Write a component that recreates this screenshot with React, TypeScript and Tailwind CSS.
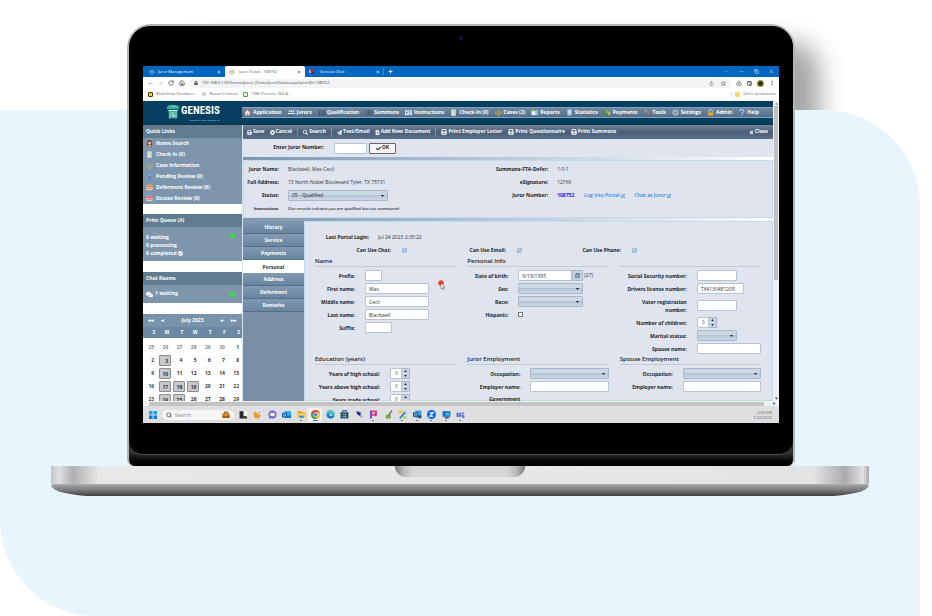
import React from "react";
import type { ReactNode } from "react";
import {
  FaSave, FaTimesCircle, FaSearch, FaPaperPlane, FaFileMedical, FaPrint, FaTimes, FaCheck,
  FaExternalLinkAlt, FaComments, FaCheckCircle, FaRegCalendarAlt, FaLock, FaGlobe,
} from "react-icons/fa";
import { ArrowLeft, ArrowRight, RotateCw, Home, Share, Star, Download, PanelRight, MoreVertical, Minus, Copy, X, Plus, ChevronDown, Search, Check } from "lucide-react";

type Kind =
  | "house" | "people" | "grid" | "card" | "sheet" | "scales" | "table" | "chart"
  | "money" | "pencil" | "gear" | "lock" | "help" | "badge" | "pin" | "cal" | "calred";

function Glyph({ kind }: { kind: Kind }) {
  const art: Record<Kind, ReactNode> = {
    house: <><path d="M1 8 8 1l7 7h-2v7H3V8z" fill="#f3e6dc" /><path d="M1 8 8 1l7 7" stroke="#d9582b" strokeWidth="2" fill="none" /><path d="M7 10h3v5H7z" fill="#b5652e" /></>,
    people: <><path d="M0 9h16v3H0z" fill="#e6edf2" /><circle cx="3" cy="5" r="2" fill="#b9d7ec" /><circle cx="8" cy="5" r="2" fill="#fff" /><circle cx="13" cy="5" r="2" fill="#b9d7ec" /><path d="M1 13h14v1H1z" fill="#2f4a61" /></>,
    grid: <><path d="M2 2h3v12H2zM7 2h3v12H7zM12 2h3v12h-3z" fill="#34495f" /><path d="M2 6h13M2 10h13" stroke="#8296aa" /></>,
    card: <><path d="M0 3h16v11H0z" fill="#e4ecf2" /><path d="M2 6h4v5H2z" fill="#5f88a9" /><path d="M8 6h6M8 9h6M8 12h4" stroke="#6f8496" strokeWidth="1.5" /></>,
    sheet: <><path d="M3 1h10v14H3z" fill="#e9f0e2" /><path d="M5 4h6M5 7h6M5 10h6" stroke="#98aabb" /><path d="M11 1h2v14h-2z" fill="#c4cf9b" /></>,
    scales: <><path d="M8 2v12M1 7h14" stroke="#b9a04a" strokeWidth="2" /><path d="M0 10h5M11 10h5M5 14h6" stroke="#d6b64c" strokeWidth="2" /></>,
    table: <><path d="M1 2h14v12H1z" fill="#eaf3f7" /><path d="M1 2h14v3H1z" fill="#6fb255" /><path d="M10 5h5v9h-5z" fill="#8bc3dd" /></>,
    chart: <><path d="M3 1h10v14H3z" fill="#9cc8f0" /><path d="M5 4h6M5 7h6M5 10h6" stroke="#e8f4ff" strokeWidth="1.5" /></>,
    money: <><path d="M1 4h9v10H1z" fill="#4a8c3a" /><circle cx="7" cy="6" r="4" fill="#80b93b" /><path d="M10 6h4v8h-4z" fill="#e0c443" /></>,
    pencil: <><path d="m2 2 11 11" stroke="#e07b35" strokeWidth="3" /><path d="m2 2 4 4" stroke="#c9d2da" strokeWidth="2" /><path d="m12 11 3 4-4-2z" fill="#5d3c20" /></>,
    gear: <><circle cx="8" cy="8" r="5" fill="none" stroke="#b3bcc5" strokeWidth="4" /><circle cx="8" cy="8" r="2" fill="#71849a" /></>,
    lock: <><path d="M4 8V5a4 4 0 0 1 8 0v3" fill="none" stroke="#d3d9df" strokeWidth="2" /><path d="M2 8h12v7H2z" fill="#e6a52c" /></>,
    help: <><path d="M4 5c0-5 9-5 9 0 0 3-4 3-4 6" fill="none" stroke="#8fc4f5" strokeWidth="3" /><circle cx="9" cy="14" r="2" fill="#6aaef0" /></>,
    badge: <><path d="M3 1h10v14H3z" fill="#7c2b1d" /><circle cx="8" cy="7" r="3" fill="#f4dfc6" /><path d="M5 11h6v4H5z" fill="#e8c25d" /><path d="M1 4h2v3H1zM13 4h2v3h-2z" fill="#e46b4b" /></>,
    pin: <><circle cx="8" cy="5" r="4" fill="#5f93cf" /><path d="M7 8h2v7H7z" fill="#4a79b4" /><circle cx="8" cy="5" r="2" fill="#95bde8" /></>,
    cal: <><path d="M1 3h14v11H1z" fill="#f0d2bb" /><path d="M1 3h14v4H1z" fill="#ea7a3c" /><path d="M4 1v4M8 1v4M12 1v4" stroke="#f6ebe2" /><path d="M3 10h10" stroke="#de6c3a" strokeWidth="2" /></>,
    calred: <><path d="M1 3h14v11H1z" fill="#f3cccc" /><path d="M1 3h14v4H1z" fill="#df4f58" /><path d="M4 1v4M8 1v4M12 1v4" stroke="#f6e2e2" /><path d="M3 10h10" stroke="#d95d63" strokeWidth="2" /></>,
  };
  return <svg viewBox="0 0 16 16" className="size-[7px] shrink-0" aria-hidden="true">{art[kind]}</svg>;
}

function ScalesMark({ color = "#9fb4c6" }: { color?: string }) {
  return (
    <svg viewBox="0 0 16 16" className="size-[6px] shrink-0" aria-hidden="true">
      <path d="M8 1v13M2 5h12" stroke={color} strokeWidth="1.6" />
      <path d="M0 10h6L3 5zM10 10h6l-3-5zM5 14h6" fill="none" stroke={color} strokeWidth="1.4" />
    </svg>
  );
}

/* ---------- browser chrome ---------- */

function TabStrip() {
  return (
    <div className="flex h-[11px] items-center bg-[#0067c0] text-[4px] text-white">
      <button className="flex w-[82px] items-center gap-[3px] pl-[6px] pr-[4px]">
        <ScalesMark /><span>Juror Management</span><X className="ml-auto size-[4px]" strokeWidth={4} />
      </button>
      <button className="flex h-full w-[80px] items-center gap-[4px] rounded-t-[2px] bg-white pl-[4px] pr-[4px] text-[#555]">
        <ScalesMark color="#b09d64" /><span>Juror Detail - 108752</span><X className="ml-auto size-[4px]" strokeWidth={4} />
      </button>
      <button className="flex w-[78px] items-center gap-[4px] pl-[4px] pr-[3px]">
        <svg viewBox="0 0 16 16" className="size-[5px]" aria-hidden="true"><path d="M1 3h9v9H1z" fill="#f6f6f6" /><path d="M4 1h10v10H4z" fill="#d2273c" /><path d="M8 9h8v6H8z" fill="#8d1731" /></svg>
        <span>· Genesis Chat</span><X className="ml-auto size-[4px]" strokeWidth={4} />
      </button>
      <span className="h-[7px] w-px bg-[#3f8fd4]" />
      <button aria-label="New tab" className="ml-[4px]"><Plus className="size-[5px]" strokeWidth={4} /></button>
      <div className="ml-auto flex items-center gap-[10px] pr-[5px] text-[#b9dafa]">
        <ChevronDown className="size-[5px]" /><Minus className="size-[5px]" /><Copy className="size-[5px]" strokeWidth={3} /><X className="size-[5px]" strokeWidth={3} />
      </div>
    </div>
  );
}

function AddressBar() {
  return (
    <div className="flex h-[12px] items-center bg-white pl-[5px] pr-[4px] text-[#555]">
      <div className="flex items-center gap-[5px]">
        <ArrowLeft className="size-[5px] text-[#888]" /><ArrowRight className="size-[5px] text-[#aaa]" />
        <RotateCw className="size-[6px]" strokeWidth={3} /><Home className="size-[6px]" strokeWidth={3} />
      </div>
      <div className="ml-[4px] flex h-[9px] min-w-0 flex-1 items-center gap-[4px] rounded-full bg-[#f1f3f4] px-[5px]">
        <FaLock className="size-[4px] shrink-0" />
        <input aria-label="Address" readOnly className="min-w-0 flex-1 bg-transparent font-['Noto_Sans',sans-serif] text-[4px] leading-[8px] text-[#555] outline-none" value="192.168.0.110/GenesisJuror_Demo/JurorDetail.aspx?jurorID=108752" />
        <Share className="size-[5px]" /><Star className="ml-[3px] size-[5px]" strokeWidth={3} />
      </div>
      <div className="ml-[5px] flex items-center gap-[5px]">
        <Download className="size-[6px]" strokeWidth={3} /><PanelRight className="size-[5px]" strokeWidth={4} />
        <span className="size-[7px] rounded-full bg-[radial-gradient(#2b2414_30%,#8a9a3c_60%,#b06a3c)]" />
        <MoreVertical className="size-[6px]" />
      </div>
    </div>
  );
}

function Bookmarks() {
  return (
    <div className="flex h-[12px] items-center bg-white pb-[2px] pl-[5px] pr-[3px] text-[4px] text-[#666]">
      <span className="mr-[3px] size-[5px] rounded-[1px] border border-[#3d3520] bg-[#ffd400]" /><a href="#b1">Mailchimp Dashboa...</a>
      <FaGlobe className="ml-[6px] mr-[3px] size-[4px] text-[#aaa]" /><a href="#b2">Nissan Connect</a>
      <span className="ml-[5px] mr-[3px] size-[5px] rounded-[1px] border border-[#4f9b55] bg-[#e4f6dd]" /><a href="#b3">1985 Porsche 944 A...</a>
      <span className="ml-auto h-[5px] w-px bg-[#ddd]" />
      <span className="ml-[3px] mr-[3px] size-[5px] rounded-[1px] bg-[#fbd768]" /><a href="#b4">Other bookmarks</a>
    </div>
  );
}

/* ---------- application header ---------- */

const menu: [Kind, string][] = [
  ["house", "Application"], ["people", "Jurors"], ["grid", "Qualification"], ["grid", "Summons"], ["card", "Instructions"],
  ["sheet", "Check-In (0)"], ["scales", "Cases (2)"], ["table", "Reports"], ["chart", "Statistics"], ["money", "Payments"],
  ["pencil", "Tools"], ["gear", "Settings"], ["lock", "Admin"], ["help", "Help"],
];

function AppHeader() {
  return (
    <header className="flex h-[23px] shrink-0 items-center bg-[#043e60]">
      <div className="flex w-[99px] shrink-0 justify-center gap-[2px] pl-[2px]">
        <svg viewBox="0 0 36 42" className="mt-[2px] h-[14px] w-[12px]" aria-hidden="true">
          <path d="M0 4 18 0l18 4v9H0z" fill="#2fb49c" />
          <path d="M4 3h28" stroke="#d9f3ee" strokeWidth="1.5" />
          <path d="M4 15h28v3H4z" fill="#d9f3ee" />
          <path d="M5 18h26v22H5z" fill="#2aa893" />
          <path d="M9 19v21M27 19v21" stroke="#d9f3ee" strokeWidth="2" />
          <path d="M22 23h-7v12h7v-6h-4" fill="none" stroke="#fff" strokeWidth="2" />
        </svg>
        <div className="flex flex-col items-end text-white">
          <span className="font-['Roboto_Condensed','Open_Sans_Condensed','Noto_Sans_Condensed',Roboto,sans-serif] text-[11px] font-bold leading-[16px]">GENESIS</span>
          <span className="text-[2px] leading-[3px] text-[#c8d6df]">Powered by Judicial Systems, Inc.</span>
        </div>
      </div>
      <nav className="flex h-[11px] min-w-0 flex-1 items-center justify-between border-y border-[#8ba2b6] bg-linear-to-b from-[#7189a1] to-[#526f8b] pl-[2px] pr-[14px] text-[5px] font-bold text-white">
        {menu.map(([k, t]) => (
          <button key={t} className="flex items-center gap-[2px] whitespace-nowrap"><Glyph kind={k} />{t}</button>
        ))}
      </nav>
    </header>
  );
}

/* ---------- left sidebar ---------- */

const links: [Kind, string][] = [
  ["badge", "Name Search"], ["sheet", "Check In (0)"], ["scales", "Case Information"],
  ["pin", "Pending Review (0)"], ["cal", "Deferment Review (0)"], ["calred", "Excuse Review (0)"],
];

function SideTitle({ children }: { children: ReactNode }) {
  return <h2 className="h-[13px] bg-[#607c90] pl-[3px] text-[5px] font-bold leading-[13px]">{children}</h2>;
}

const weeks = [
  [25, 26, 27, 28, 29, 30, 1], [2, 3, 4, 5, 6, 7, 8], [9, 10, 11, 12, 13, 14, 15],
  [16, 17, 18, 19, 20, 21, 22], [23, 24, 25, 26, 27, 28, 29],
];
const marked = ["1-3", "2-10", "3-17", "3-18", "3-19", "4-24", "4-25"];

function dayClass(week: number, day: number, column: number) {
  if (marked.includes(week + "-" + day)) return "block h-[11px] w-[12px] rounded-[1px] border border-[#8d8d8d] bg-[#c9c9c9] font-bold leading-[10px] text-[#333] pr-[2px]";
  if (week === 0 && day > 20) return "block leading-[11px] text-[#888] pr-[3px]";
  if (column === 0 || column === 6) return "block leading-[11px] text-[#444] pr-[3px]";
  return "block font-bold leading-[11px] text-[#333] pr-[3px]";
}

function Calendar() {
  return (
    <section aria-label="Calendar">
      <div className="flex h-[13px] items-center bg-[#7893ab] px-[5px] text-[5px] font-bold text-white">
        <button aria-label="Previous year">◂◂</button><button aria-label="Previous month" className="ml-[7px]">◂</button>
        <span className="flex-1 text-center">July 2023</span>
        <button aria-label="Next month" className="mr-[7px]">▸</button><button aria-label="Next year">▸▸</button>
      </div>
      <table className="w-full table-fixed border-collapse text-right text-[5px]">
        <thead className="bg-[#6c89a3] text-white">
          <tr>{["S", "M", "T", "W", "T", "F", "S"].map((d, i) => <th key={i} className="h-[11px] pr-[2px] text-right leading-[11px]">{d}</th>)}</tr>
        </thead>
        <tbody>
          <tr><td className="h-[3px]" /></tr>
          {weeks.map((w, r) => (
            <tr key={r}>{w.map((d, c) => <td key={c} className="h-[13px] pl-[2px] align-middle"><span className={dayClass(r, d, c)}>{d}</span></td>)}</tr>
          ))}
        </tbody>
      </table>
    </section>
  );
}

function Sidebar() {
  return (
    <aside className="w-[99px] shrink-0 bg-white text-[5px] font-bold text-white">
      <SideTitle>Quick Links</SideTitle>
      <ul className="bg-[#7d96ae]">
        {links.map(([k, t]) => (
          <li key={t} className="h-[11px]"><a href={"#" + k} className="flex h-full items-center gap-[3px] pl-[3px]"><Glyph kind={k} />{t}</a></li>
        ))}
      </ul>
      <div className="h-[10px]" />
      <SideTitle>Print Queue (A)</SideTitle>
      <div className="flex h-[34px] items-start justify-between bg-[#7d96ae] pl-[3px] pr-[7px] pt-[6px] leading-[8px]">
        <div><p>0 waiting</p><p>0 processing</p><p className="flex items-center gap-[1px]">6 completed <FaCheckCircle className="size-[5px]" /></p></div>
        <span className="size-[5px] rounded-full bg-[#3ddc3d]" />
      </div>
      <div className="h-[11px]" />
      <SideTitle>Chat Rooms</SideTitle>
      <div className="flex h-[18px] items-center justify-between bg-[#7d96ae] pl-[3px] pr-[7px]">
        <p className="flex items-center gap-[2px]"><FaComments className="size-[7px]" />1 waiting</p>
        <span className="size-[5px] rounded-full bg-[#3ddc3d]" />
      </div>
      <div className="h-[11px]" />
      <Calendar />
    </aside>
  );
}

/* ---------- form controls ---------- */

const box = "block h-[11px] rounded-[1px] border border-[#b9c4d2] bg-white px-[3px] text-[5px] leading-[9px] text-[#333] outline-none";

function Row({ label, id, w, tall, children }: { label: string; id: string; w: string; tall?: boolean; children: ReactNode }) {
  return (
    <div className={tall ? "flex h-[21px] items-center gap-[10px]" : "flex h-[13px] items-center gap-[10px]"}>
      <label htmlFor={id} className={w + " flex shrink-0 justify-end text-right font-bold leading-[8px]" + (tall ? " pl-[12px]" : " whitespace-nowrap")}>{label}</label>
      {children}
    </div>
  );
}

function Text({ id, w, value = "" }: { id: string; w: string; value?: string }) {
  return <input id={id} className={box + " " + w} defaultValue={value} />;
}

function Pick({ id, w, value = "" }: { id: string; w: string; value?: string }) {
  return (
    <span className={"relative block h-[11px] " + w}>
      <select id={id} className="block h-full w-full appearance-none rounded-[1px] border border-[#a9b9ca] bg-linear-to-b from-[#ccd8e4] from-45% via-[#b2c4d5] via-50% to-[#ccdae7] px-[3px] text-[5px] leading-[9px] text-[#222]">
        <option>{value}</option>
      </select>
      <svg viewBox="0 0 3 2" className="pointer-events-none absolute right-[4px] top-[5px] h-[2px] w-[3px]" aria-hidden="true"><path d="M0 0h3L1.500 2z" fill="#16202c" /></svg>
    </span>
  );
}

function Spin({ id }: { id: string }) {
  return (
    <span className="flex h-[11px] w-[20px]">
      <input id={id} inputMode="numeric" defaultValue="0" className="w-[12px] rounded-l-[1px] border border-[#b9c4d2] bg-white pl-[4px] text-[5px] leading-[9px] text-[#555] outline-none" />
      <span className="flex w-[8px] flex-col items-center justify-around rounded-r-[1px] border border-l-0 border-[#a9b9ca] bg-[#c9d6e3]">
        <button aria-label="Increase"><svg viewBox="0 0 4 3" className="block h-[2px] w-[3px]"><path d="M0 3h4L2 0z" fill="#222" /></svg></button>
        <button aria-label="Decrease"><svg viewBox="0 0 4 3" className="block h-[2px] w-[3px]"><path d="M0 0h4L2 3z" fill="#222" /></svg></button>
      </span>
    </span>
  );
}

function Tick({ id, on }: { id: string; on?: boolean }) {
  return (
    <span className="relative block size-[5px]">
      <input id={id} type="checkbox" defaultChecked={on} className={on ? "block size-[5px] appearance-none border border-[#a6c4dd] bg-[#c3dcf0]" : "block size-[5px] appearance-none border border-[#777] bg-white"} />
      {on && <Check className="pointer-events-none absolute inset-0 size-[5px] text-[#3f7fb5]" strokeWidth={3} />}
    </span>
  );
}

function Head({ children }: { children?: ReactNode }) {
  return <h3 className="mb-[2px] h-[10px] border-b border-[#c3cad6] text-[6px] font-semibold leading-[8px] text-[#222]">{children}</h3>;
}

/* ---------- main panel ---------- */

function Tool({ icon, children }: { icon: ReactNode; children: ReactNode }) {
  return <button className="flex items-center gap-[1px] whitespace-nowrap">{icon}{children}</button>;
}
const Rule = () => <span className="h-[10px] w-px bg-[#7e8fa4]" />;

function Toolbar() {
  return (
    <div className="flex h-[14px] shrink-0 items-center gap-[5px] bg-linear-to-b from-[#72839a] via-[#4a5f79] to-[#5b6f88] pl-[4px] pr-[5px] text-[5px] font-bold text-white">
      <Tool icon={<FaSave className="size-[5px]" />}>Save</Tool>
      <Tool icon={<FaTimesCircle className="size-[5px]" />}>Cancel</Tool><Rule />
      <Tool icon={<FaSearch className="size-[5px]" />}>Search</Tool><Rule />
      <Tool icon={<FaPaperPlane className="size-[5px]" />}>Text/Email</Tool>
      <Tool icon={<FaFileMedical className="size-[5px]" />}>Add New Document</Tool><Rule />
      <div className="flex gap-[6px]">
        <Tool icon={<FaPrint className="size-[6px]" />}>Print Employer Letter</Tool>
        <Tool icon={<FaPrint className="size-[6px]" />}>Print Questionnaire</Tool>
        <Tool icon={<FaPrint className="size-[6px]" />}>Print Summons</Tool>
      </div>
      <span className="ml-auto"><Tool icon={<FaTimes className="size-[5px]" />}>Close</Tool></span>
    </div>
  );
}

function Fact({ label, w, children }: { label: string; w: string; children: ReactNode }) {
  return (
    <div className="flex h-[13px] items-center gap-[9px] whitespace-nowrap">
      <dt className={w + " flex shrink-0 justify-end font-bold text-[#222]"}>{label}</dt>
      <dd className="flex items-center gap-[10px]">{children}</dd>
    </div>
  );
}

function Summary() {
  return (
    <section className="shrink-0 bg-[#dfe4ee] text-[5px] text-[#333]">
      <form className="flex h-[18px] items-center">
        <label htmlFor="jn" className="flex w-[81px] justify-end whitespace-nowrap font-bold text-[#222]">Enter Juror Number:</label>
        <input id="jn" className={box + " ml-[10px] w-[33px]"} />
        <button type="button" className="ml-[2px] flex h-[11px] w-[27px] items-center justify-center gap-[1px] rounded-[1px] border border-[#666] bg-[#f5f6f8] font-bold text-[#222]"><FaCheck className="size-[5px]" />OK</button>
      </form>
      <div className="h-[3px] bg-linear-to-r from-[#7f95ae] via-[#b9cbdb] to-white" />
      <div className="grid h-[58px] grid-cols-[47fr_53fr] border border-[#c4dcea] pt-[2px]">
        <dl>
          <Fact label="Juror Name:" w="w-[35px]">Blackwell, Max Cecil</Fact>
          <Fact label="Full Address:" w="w-[35px]">73 North Nobel Boulevard Tyler, TX 75731</Fact>
          <Fact label="Status:" w="w-[35px]"><Pick id="status" w="w-[100px]" value="05 - Qualified" /></Fact>
          <div className="flex h-[13px] items-center gap-[9px] whitespace-nowrap text-[4px]">
            <dt className="flex w-[35px] justify-end font-bold text-[#222]">Instructions:</dt>
            <dd className="font-semibold">Our records indicate you are qualified but not summoned</dd>
          </div>
        </dl>
        <dl>
          <Fact label="Summons-FTA-Defer:" w="w-[56px]">1-0-1</Fact>
          <Fact label="eSignature:" w="w-[56px]">12766</Fact>
          <Fact label="Juror Number:" w="w-[56px]">
            <b className="text-[#1a16e0]">108752</b>
            <a href="#portal" className="flex items-center gap-[1px] font-semibold text-[#2f86dc]">Log into Portal<FaExternalLinkAlt className="size-[4px]" /></a>
            <a href="#chat" className="flex items-center gap-[1px] font-semibold text-[#2f86dc]">Chat as Juror<FaExternalLinkAlt className="size-[4px]" /></a>
          </Fact>
        </dl>
      </div>
      <div className="h-[3px] bg-linear-to-r from-[#7f95ae] via-[#b9cbdb] to-white" />
    </section>
  );
}

const tabs = ["History", "Service", "Payments", "Personal", "Address", "Deferment", "Remarks"];

function PersonForm() {
  return (
    <div className="flex-1 border border-[#c4dcea] bg-[#dfe4ee] pl-[10px] pr-[11px] pt-[10px] text-[5px] text-[#222]">
      <div className="flex h-[12px] items-center gap-[9px]">
        <span className="flex w-[54px] justify-end whitespace-nowrap font-bold">Last Portal Login:</span>
        <span className="whitespace-nowrap text-[#333]">Jul 24 2023 2:35:22</span>
      </div>
      <div className="flex h-[13px] items-center">
        <div className="flex w-[92px] items-center justify-end gap-[11px]"><label htmlFor="cc" className="font-bold">Can Use Chat:</label><Tick id="cc" on /></div>
        <div className="flex w-[115px] items-center justify-end gap-[11px]"><label htmlFor="ce" className="font-bold">Can Use Email:</label><Tick id="ce" on /></div>
        <div className="flex w-[115px] items-center justify-end gap-[11px]"><label htmlFor="cp" className="font-bold">Can Use Phone:</label><Tick id="cp" on /></div>
      </div>
      <div className="grid grid-cols-3 gap-x-[11px]">
        <section>
          <Head>Name</Head>
          <Row label="Prefix:" id="px" w="w-[40px]"><Text id="px" w="w-[17px]" /></Row>
          <Row label="First name:" id="fn" w="w-[40px]"><Text id="fn" w="w-[64px]" value="Max" /></Row>
          <Row label="Middle name:" id="mn" w="w-[40px]"><Text id="mn" w="w-[64px]" value="Cecil" /></Row>
          <Row label="Last name:" id="ln" w="w-[40px]"><Text id="ln" w="w-[64px]" value="Blackwell" /></Row>
          <Row label="Suffix:" id="sx" w="w-[40px]"><Text id="sx" w="w-[27px]" /></Row>
        </section>
        <section>
          <Head>Personal Info</Head>
          <Row label="Date of birth:" id="dob" w="w-[41px]">
            <span className="flex items-center">
              <Text id="dob" w="w-[54px]" value="9/19/1995" />
              <button aria-label="Open calendar" className="flex h-[11px] w-[11px] items-center justify-center border border-[#a9b9ca] bg-[#c3d2e0] text-[#2c4a66]"><FaRegCalendarAlt className="size-[5px]" /></button>
              <span className="ml-[1px] text-[#333]">(27)</span>
            </span>
          </Row>
          <Row label="Sex:" id="sex" w="w-[41px]"><Pick id="sex" w="w-[65px]" /></Row>
          <Row label="Race:" id="race" w="w-[41px]"><Pick id="race" w="w-[65px]" /></Row>
          <Row label="Hispanic:" id="hisp" w="w-[41px]"><Tick id="hisp" /></Row>
        </section>
        <section>
          <Head />
          <Row label="Social Security number:" id="ssn" w="w-[67px]"><Text id="ssn" w="w-[40px]" /></Row>
          <Row label="Drivers license number:" id="dl" w="w-[67px]"><Text id="dl" w="w-[47px]" value="TX4130481209" /></Row>
          <Row label="Voter registration number:" id="vr" w="w-[67px]" tall><Text id="vr" w="w-[40px]" /></Row>
          <Row label="Number of children:" id="nc" w="w-[67px]"><Spin id="nc" /></Row>
          <Row label="Marital status:" id="ms" w="w-[67px]"><Pick id="ms" w="w-[40px]" /></Row>
          <Row label="Spouse name:" id="sn" w="w-[67px]"><Text id="sn" w="w-[64px]" /></Row>
        </section>
        <section>
          <Head>Education (years)</Head>
          <Row label="Years of high school:" id="y1" w="w-[65px]"><Spin id="y1" /></Row>
          <Row label="Years above high school:" id="y2" w="w-[65px]"><Spin id="y2" /></Row>
          <Row label="Years trade school:" id="y3" w="w-[65px]"><Spin id="y3" /></Row>
        </section>
        <section>
          <Head>Juror Employment</Head>
          <Row label="Occupation:" id="jo" w="w-[53px]"><Pick id="jo" w="flex-1" /></Row>
          <Row label="Employer name:" id="je" w="w-[53px]"><Text id="je" w="min-w-0 flex-1" /></Row>
          <p className="flex h-[13px] w-[53px] items-center justify-end font-bold">Government</p>
        </section>
        <section>
          <Head>Spouse Employment</Head>
          <Row label="Occupation:" id="so" w="w-[53px]"><Pick id="so" w="flex-1" /></Row>
          <Row label="Employer name:" id="se" w="w-[53px]"><Text id="se" w="min-w-0 flex-1" /></Row>
        </section>
      </div>
    </div>
  );
}

function MainPanel() {
  return (
    <main className="flex min-w-0 flex-1 flex-col border-l border-[#d5e6f1]">
      <Toolbar />
      <Summary />
      <div className="flex min-h-0 flex-1">
        <div role="tablist" className="w-[61px] shrink-0 bg-[#788fa6]">
          {tabs.map((t) => (
            <button key={t} role="tab" aria-selected={t === "Personal"}
              className={t === "Personal"
                ? "block h-[13px] w-full bg-white text-center text-[5px] font-bold leading-[12px] text-[#333]"
                : "block h-[13px] w-full border-b border-[#506f8c] bg-linear-to-b from-[#8299b0] to-[#68859f] text-center text-[5px] font-bold leading-[12px] text-white"}>
              {t}
            </button>
          ))}
        </div>
        <PersonForm />
      </div>
    </main>
  );
}

/* ---------- taskbar ---------- */

const apps: { name: string; art: ReactNode; run?: boolean }[] = [
  { name: "Task view", art: <><path d="M5 2h10v9H5z" fill="#f2f2f2" /><path d="M1 2h7v9h6v4H1z" fill="#2a2a2a" /></> },
  { name: "Weather", art: <><circle cx="7" cy="9" r="6" fill="#f29a22" /><path d="M5 1h11v6H8z" fill="#ececec" /><path d="M9 4h5" stroke="#555" /></> },
  { name: "Chat", art: <><circle cx="8" cy="8" r="7" fill="#6b63c9" /><path d="M4 5h8v6H4z" fill="#f4f2ff" /><path d="m2 15 1-5 4 4z" fill="#6b63c9" /></> },
  { name: "Mail", art: <><path d="M4 2h12v12H4z" fill="#35a4e8" /><path d="m4 8 6 4 6-4v6H4z" fill="#1b6fc0" /><path d="M0 5h9v8H0z" fill="#0f5bab" /><circle cx="4.500" cy="9" r="2" fill="none" stroke="#fff" /></> },
  { name: "Explorer", run: true, art: <><path d="M1 2h6l2 2h6v10H1z" fill="#e9a51f" /><path d="M1 6h14v8H1z" fill="#ffd25a" /><path d="M4 10h8v4H4z" fill="#2f8fe0" /></> },
  { name: "Chrome", run: true, art: <><circle cx="8" cy="8" r="8" fill="#e33b2e" /><path d="M1 4a8 8 0 0 0 7 12l4-7-7 1z" fill="#2da94f" /><path d="M8 16a8 8 0 0 0 7-12H8l4 5z" fill="#fcc934" /><circle cx="8" cy="8" r="4" fill="#fff" /><circle cx="8" cy="8" r="3" fill="#3f7fe8" /></> },
  { name: "Edge", art: <><circle cx="8" cy="8" r="7" fill="#1673c9" /><path d="M1 8a7 7 0 0 1 14 0c0 3-5 3-5 1 1-3-5-4-9-1" fill="#42c6c8" /><circle cx="8" cy="9" r="2" fill="#dff" /></> },
  { name: "Store", art: <><path d="M1 4h14v11H1z" fill="#164a83" /><path d="M5 4V1h6v3" fill="none" stroke="#3b6ea5" strokeWidth="2" /><path d="M4 6h3v3H4z" fill="#e9542c" /><path d="M8 6h3v3H8z" fill="#7cbb3c" /><path d="M4 10h3v3H4z" fill="#30a5e8" /><path d="M8 10h3v3H8z" fill="#f6bf26" /></> },
  { name: "Database", art: <><path d="m2 2 8 2 1 8-7-4z" fill="#27318f" /><path d="m9 6 6 6-5 2z" fill="#a8b0c8" /></> },
  { name: "PDF", run: true, art: <><path d="M2 1h3v14H2z" fill="#5a37c7" /><path d="M5 1h9v9H5z" fill="#e2356d" /><path d="M6 4h4v3H6z" fill="#fff" /><path d="m10 8 5-3-4 7z" fill="#7d3dd0" /></> },
  { name: "Notepad", art: <><path d="M3 3h9v12H3z" fill="#d9e6c4" /><path d="M3 9h9v6H3z" fill="#74a845" /><path d="m14 1-6 9" stroke="#555" strokeWidth="2" /></> },
  { name: "Snip", run: true, art: <><path d="M1 1h7v5H1z" fill="#f5c736" /><path d="M9 2h6v5H9z" fill="#7ec4e8" /><path d="m3 15 9-10" stroke="#2c87c9" strokeWidth="3" /><path d="M8 11h7v4H8z" fill="#a9d15b" /></> },
  { name: "Outlook", run: true, art: <><path d="M4 1h11v13H4z" fill="#3d9fe0" /><path d="M0 4h9v8H0z" fill="#0d56a5" /><circle cx="4.500" cy="8" r="2" fill="none" stroke="#fff" /><circle cx="12" cy="12" r="3" fill="#234a80" /></> },
  { name: "Zoom", run: true, art: <><circle cx="8" cy="8" r="8" fill="#1266e8" /><path d="M5 5h6l-6 6h6" fill="none" stroke="#fff" strokeWidth="2" /></> },
  { name: "Remote desktop", run: true, art: <><path d="M1 2h14v10H1z" fill="#1b75c9" /><path d="M7 5h6v5H7z" fill="#39c0d8" /><path d="M5 12h7v3H5z" fill="#3b4d63" /></> },
  { name: "Teams", run: true, art: <><circle cx="8" cy="8" r="7" fill="#d9dbf2" /><path d="M1 5h8v7H1z" fill="#4d55b8" /><path d="M3 7h4M5 7v4" stroke="#fff" /><circle cx="12" cy="6" r="2" fill="#6a71cf" /><path d="M10 9h5v5h-4z" fill="#6a71cf" /></> },
];

function Taskbar() {
  return (
    <footer className="flex h-[17px] items-center bg-[#dedfe1] pl-[6px] pr-[7px] text-[4px]">
      <button aria-label="Start"><svg viewBox="0 0 16 16" className="size-[8px]"><path d="M0 0h7v7H0zM9 0h7v7H9z" fill="#23a0ee" /><path d="M0 9h7v7H0zM9 9h7v7H9z" fill="#087cd8" /></svg></button>
      <div className="ml-[5px] flex h-[10px] w-[72px] items-center gap-[3px] rounded-full bg-[#f5f5f5] pl-[4px] pr-[4px]">
        <Search className="size-[6px] shrink-0 text-[#444]" strokeWidth={3} />
        <input aria-label="Search" placeholder="Search" className="w-full min-w-0 bg-transparent text-[5px] leading-[8px] outline-none placeholder:text-[#888]" />
        <svg viewBox="0 0 16 16" className="size-[8px] shrink-0" aria-hidden="true"><path d="M5 4V2h6v2" fill="none" stroke="#7a4310" strokeWidth="2" /><path d="M1 4h14v10H1z" fill="#d98218" /><path d="M1 9h14v5H1z" fill="#a8580d" /><path d="M7 8h2v3H7z" fill="#ffe08a" /></svg>
      </div>
      <div className="ml-[2px] flex">
        {apps.map((a) => (
          <button key={a.name} aria-label={a.name} className={a.name === "Chrome" ? "mr-[1px] flex h-[14px] w-[14px] flex-col items-center justify-end gap-[1px] rounded-[2px] bg-[#f1f1f1] pb-px" : "flex h-[14px] w-[14px] flex-col items-center justify-end gap-[1px] pb-px even:mr-[1px]"}>
            <svg viewBox="0 0 16 16" className="size-[9px]" aria-hidden="true">{a.art}</svg>
            <span className={a.name === "Chrome" ? "h-px w-[5px] bg-[#1976c9]" : a.run ? "h-px w-[2px] bg-[#777]" : "h-px w-[2px]"} />
          </button>
        ))}
      </div>
      <div className="ml-auto text-right leading-[5px] text-[#666]"><p>2:56 PM</p><p>7/24/2023</p></div>
    </footer>
  );
}

/* ---------- laptop ---------- */

function Screen() {
  return (
    <div className="relative overflow-hidden bg-white">
      <TabStrip />
      <AddressBar />
      <Bookmarks />
      <div className="flex h-[300px] overflow-hidden">
        <div className="flex min-w-0 flex-1 flex-col bg-[#043e60]">
          <AppHeader />
          <div className="flex min-h-0 flex-1 overflow-hidden border-t border-[#1b2f40]"><Sidebar /><MainPanel /></div>
        </div>
        <div className="flex w-[6px] flex-col items-center bg-[#f1f1f1] py-[1px] text-[#777]">
          <svg viewBox="0 0 4 3" className="h-[3px] w-[3px]" aria-hidden="true"><path d="M0 3h4L2 0z" fill="#888" /></svg>
          <span className="mt-[1px] h-[174px] w-[4px] bg-[#c1c1c1]" />
          <svg viewBox="0 0 4 3" className="mt-auto h-[3px] w-[3px]" aria-hidden="true"><path d="M0 0h4L2 3z" fill="#555" /></svg>
        </div>
      </div>
      <div className="flex h-[5px] items-center bg-[#f1f1f1] pl-[6px] pr-[3px]">
        <span className="h-[4px] flex-1 bg-[#c4c4c4]" />
        <svg viewBox="0 0 3 4" className="ml-[9px] h-[3px] w-[3px]" aria-hidden="true"><path d="M0 0v4l3-2z" fill="#555" /></svg>
      </div>
      <Taskbar />
      <svg viewBox="0 0 8 10" className="absolute left-[295px] top-[214px] h-[10px] w-[8px]" aria-hidden="true">
        <circle cx="3" cy="3" r="2.700" fill="#f0402e" />
        <path d="m3 3 4 4-2 .2 1 2-1 .6-1-2-1 1z" fill="#fff" stroke="#444" strokeWidth=".5" />
      </svg>
    </div>
  );
}

export default function App() {
  return (
    <div className="grid min-h-screen grid-cols-1 overflow-hidden bg-white font-['Open_Sans','Noto_Sans',sans-serif]">
      <div className="[grid-area:1/1] z-0 mb-[150px] ml-[180px] mr-[112px] mt-[42px] rounded-[30px] bg-black/35 blur-[12px]" />
      <div className="[grid-area:1/1] z-[1] mr-[12px] mt-[110px] rounded-bl-[96px] rounded-tr-[96px] bg-[#e8f5fc]" />
      <div className="[grid-area:1/1] z-10 ml-[51px] mr-[63px] pt-[24px]">
        <div className="ml-[76px] mr-[74px] rounded-b-[7px] rounded-t-[24px] border-2 border-b-0 border-[#b4b5b6] bg-linear-to-b from-[#303331] from-97% to-black">
          <div className="rounded-b-[14px] rounded-t-[21px] border-b border-[#4b4e4d] bg-black px-[14px] pb-[31px]">
            <div className="flex h-[40px] items-start justify-center pt-[10px]"><span className="size-[4px] rounded-full bg-[#14143c]" /></div>
            <Screen />
          </div>
          <div className="h-[11px]" />
        </div>
        <div className="flex h-[19px] justify-center rounded-bl-[3px] rounded-br-[3px] border-b border-[#aaa] bg-[linear-gradient(90deg,#c4c4c6_0,#e0e0e2_8px,#aeb0b3_22px,#e8e8e7_48px,#e4e4e5_calc(100%-56px),#a9abae_calc(100%-24px),#e2e2e3_calc(100%-6px),#a9a9aa_100%)]">
          <div className="h-[11px] w-[130px] rounded-b-[11px] bg-[linear-gradient(90deg,#777_0,#b5b6b7_8px,#d5d7d7_18px,#d5d7d7_calc(100%-18px),#b5b6b7_calc(100%-8px),#777_100%)]" />
        </div>
        <div className="h-[11px] rounded-b-[44px_11px] bg-linear-to-b from-[#a0a1a4] via-[#77797b] to-[#3e3e40]" />
      </div>
    </div>
  );
}
